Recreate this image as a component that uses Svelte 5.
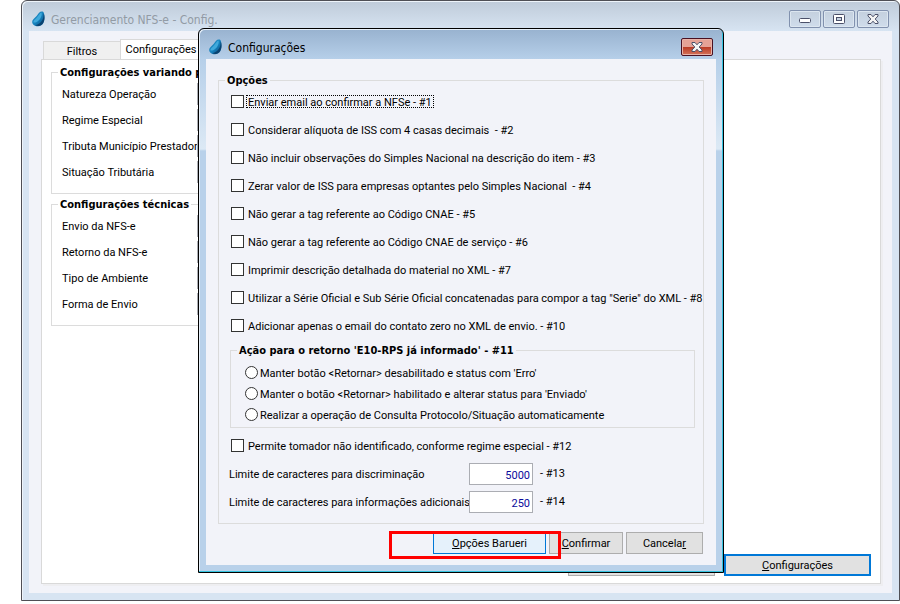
<script>
  const variableFields = [
    { id: 'natureza', text: 'Natureza Operação' },
    { id: 'regime', text: 'Regime Especial' },
    { id: 'tributa', text: 'Tributa Município Prestador' },
    { id: 'situacao', text: 'Situação Tributária' },
  ];

  const technicalFields = [
    { id: 'envio', text: 'Envio da NFS-e' },
    { id: 'retorno', text: 'Retorno da NFS-e' },
    { id: 'ambiente', text: 'Tipo de Ambiente' },
    { id: 'forma', text: 'Forma de Envio' },
  ];

  let options = $state([
    { text: 'Enviar email ao confirmar a NFSe - #1', checked: false },
    { text: 'Considerar alíquota de ISS com 4 casas decimais  - #2', checked: false },
    { text: 'Não incluir observações do Simples Nacional na descrição do item - #3', checked: false },
    { text: 'Zerar valor de ISS para empresas optantes pelo Simples Nacional  - #4', checked: false },
    { text: 'Não gerar a tag referente ao Código CNAE - #5', checked: false },
    { text: 'Não gerar a tag referente ao Código CNAE de serviço - #6', checked: false },
    { text: 'Imprimir descrição detalhada do material no XML - #7', checked: false },
    { text: 'Utilizar a Série Oficial e Sub Série Oficial concatenadas para compor a tag "Serie" do XML - #8', checked: false },
    { text: 'Adicionar apenas o email do contato zero no XML de envio. - #10', checked: false },
  ]);

  const actions = [
    { id: 'manter-desabilitado', text: "Manter botão <Retornar> desabilitado e status com 'Erro'" },
    { id: 'manter-habilitado', text: "Manter o botão <Retornar> habilitado e alterar status para 'Enviado'" },
    { id: 'consultar', text: 'Realizar a operação de Consulta Protocolo/Situação automaticamente' },
  ];

  let action = $state('');
  let allowUnidentified = $state(false);
  let focused = $state(0);
  let limits = $state([
    { id: 'discriminacao', text: 'Limite de caracteres para discriminação', value: '5000', tag: '- #13' },
    { id: 'adicionais', text: 'Limite de caracteres para informações adicionais', value: '250', tag: '- #14' },
  ]);
</script>

{#snippet logo()}
  <svg class="logo" viewBox="0 0 16 18" aria-hidden="true">
    <defs>
      <linearGradient id="drop" x1="0" y1="0" x2="1" y2="1">
        <stop offset="0" stop-color="#2a8fc4" />
        <stop offset="0.5" stop-color="#1682bd" />
        <stop offset="1" stop-color="#0b4c80" />
      </linearGradient>
    </defs>
    <path d="M10.800 1.500C13 1.500 13.200 3.500 13.400 7C13.700 12.500 11.500 16.300 7 16.300C3.500 16.300 1 14.500 1.200 11.800C1.500 8.800 4.300 8 6 5.500C7.500 3.300 8.500 1.500 10.800 1.500Z" fill="url(#drop)" />
    <path d="M10.500 2.500C8.500 3 7.600 6 5.500 8C3.500 10 2.300 10.500 2.500 12.500C5 13.200 8.500 10.500 9.800 7.500C10.600 5.700 11 4 10.500 2.500Z" fill="#3fa9db" />
    <path d="M12.600 3.500C13 9 10.500 13.500 4.500 15.300C9.500 17.500 13.600 13.500 13.500 7.500C13.500 5.500 13.200 4.300 12.600 3.500Z" fill="#0a4270" />
  </svg>
{/snippet}

{#snippet cross()}
  <svg viewBox="0 0 12 10" aria-hidden="true">
    <path d="M1 .5h3l2 2.300 2-2.300h3v1.500L8.200 5 11 8v1.500H8L6 7.200 4 9.500H1V8l2.800-3L1 2z" fill="#f4f4f4" stroke="#4b5069" />
  </svg>
{/snippet}

{#snippet fieldRows(fields)}
  {#each fields as field}
    <div class="field">
      <label for={field.id}>{field.text}</label>
      <select id={field.id}></select>
    </div>
  {/each}
{/snippet}

<div class="window">
  <header class="titlebar">
    {@render logo()}
    <span class="title inactive">Gerenciamento NFS-e - Config.</span>
    <div class="controls">
      <button class="control" aria-label="Minimizar">
        <svg viewBox="0 0 12 10" aria-hidden="true">
          <rect x="0.500" y="4.500" width="11" height="4" rx="1" fill="#fff" stroke="#4b5069" />
        </svg>
      </button>
      <button class="control" aria-label="Maximizar">
        <svg viewBox="0 0 12 10" aria-hidden="true">
          <rect x="0.500" y="0.500" width="11" height="9" rx="1" fill="#fff" stroke="#4b5069" />
          <rect x="3.500" y="3.500" width="5" height="3" fill="#c6d3e2" stroke="#4b5069" />
        </svg>
      </button>
      <button class="control" aria-label="Fechar">{@render cross()}</button>
    </div>
  </header>

  <main class="client">
    <nav class="tabs">
      <button class="tab">Filtros</button>
      <button class="tab active">Configurações</button>
    </nav>
    <section class="panel">
      <div class="groups">
        <fieldset>
          <legend>Configurações variando por</legend>
          {@render fieldRows(variableFields)}
        </fieldset>
        <fieldset>
          <legend>Configurações técnicas</legend>
          {@render fieldRows(technicalFields)}
        </fieldset>
      </div>
      <footer class="panel-actions">
        <button class="button wide" aria-label="Salvar"></button>
        <button class="button wide default"><span><u>C</u>onfigurações</span></button>
      </footer>
    </section>
  </main>

  <div class="dialog" role="dialog" aria-labelledby="dialog-title">
    <header class="titlebar">
      {@render logo()}
      <span class="title" id="dialog-title">Configurações</span>
      <div class="controls">
        <button class="control close" aria-label="Fechar">{@render cross()}</button>
      </div>
    </header>

    <form class="dialog-client">
      <fieldset class="options">
        <legend>Opções</legend>
        {#each options as option, index}
          <label class="check">
            <input type="checkbox" bind:checked={option.checked} onfocus={() => (focused = index)} />
            <span class:focused={index === focused}>{option.text}</span>
          </label>
        {/each}

        <fieldset class="actions">
          <legend>Ação para o retorno 'E10-RPS já informado' - #11</legend>
          {#each actions as item}
            <label class="radio">
              <input type="radio" name="action" value={item.id} bind:group={action} />
              <span>{item.text}</span>
            </label>
          {/each}
        </fieldset>

        <label class="check">
          <input type="checkbox" bind:checked={allowUnidentified} />
          <span>Permite tomador não identificado, conforme regime especial - #12</span>
        </label>

        {#each limits as limit}
          <div class="limit">
            <label for={limit.id}>{limit.text}</label>
            <input id={limit.id} type="text" bind:value={limit.value} />
            <span>{limit.tag}</span>
          </div>
        {/each}
      </fieldset>

      <footer class="dialog-actions">
        <button type="button" class="button hot"><span><u>O</u>pções Barueri</span></button>
        <button type="button" class="button confirm"><span><u>C</u>onfirmar</span></button>
        <button type="button" class="button cancel"><span>Cancela<u>r</u></span></button>
        <div class="marker"></div>
      </footer>
    </form>
  </div>
</div>

<style>
  :global(body) {
    margin: 0;
    background: #fff;
  }

  * {
    box-sizing: border-box;
  }

  .window,
  button,
  input,
  select {
    font-family: Roboto, 'Liberation Sans', sans-serif;
    font-size: 11px;
    color: #000;
  }

  .window {
    position: relative;
    display: flex;
    flex-direction: column;
    min-height: calc(100vh - 3px);
    margin: 0 0 3px 21px;
    padding: 0 7px 7px;
    border: 1px solid #4f4f55;
    border-radius: 6px 6px 0 0;
    background: linear-gradient(#bfcbd9, #d7e4f2 30px);
    box-shadow: inset 1px 1px #eef4fa;
    line-height: 16px;
  }

  .titlebar {
    display: flex;
    align-items: center;
    height: 30px;
    padding: 6px 3px 0 2px;
  }

  .logo {
    width: 16px;
    height: 18px;
    margin-right: 4px;
  }

  .title {
    flex: 1;
    padding-top: 1px;
    font-family: 'DejaVu Sans Condensed', 'DejaVu Sans', sans-serif;
    font-size: 12px;
  }

  .inactive {
    color: #929ba5;
  }

  .controls {
    display: flex;
    gap: 2px;
  }

  .control {
    display: grid;
    place-items: center;
    width: 32px;
    height: 18px;
    padding: 0;
    border: 1px solid #8191ae;
    border-radius: 2px;
    background: linear-gradient(#c4d0de, #cfdceb);
    box-shadow: inset 0 0 0 1px #dce6f0;
  }

  .control svg {
    width: 12px;
    height: 10px;
  }

  .close {
    border-color: #4a1122;
    background: linear-gradient(#e5a296 0 8px, #b93a24 8px, #d4735a);
    box-shadow: inset 0 0 0 1px #e8b3a9;
  }

  .client {
    display: flex;
    flex: 1;
    flex-direction: column;
    padding: 8px 11px 9px 12px;
    background: #f2f3f9;
  }

  .tabs {
    display: flex;
    align-items: flex-end;
    height: 20px;
    padding-left: 2px;
  }

  .tab {
    width: 78px;
    height: 18px;
    padding: 2px 0 0;
    border: 1px solid #d9d9d9;
    border-bottom: 0;
    background: #f0f0f0;
  }

  .tab.active {
    width: 82px;
    height: 20px;
    margin-left: -1px;
    padding: 0;
    background: #fff;
  }

  .panel {
    display: flex;
    flex: 1;
    flex-direction: column;
    justify-content: space-between;
    padding: 4px 9px 7px;
    border: 1px solid #d9d9d9;
    background: #fff;
    box-shadow: 2px 2px #eeeef1;
  }

  fieldset {
    min-width: 0;
    margin: 0;
    padding: 1px 10px 8px;
    border: 1px solid #dcdcdc;
  }

  legend {
    height: 16px;
    margin-left: -4px;
    padding: 0 2px;
    font-family: 'DejaVu Sans Condensed', 'DejaVu Sans', sans-serif;
    font-weight: bold;
    line-height: 18px;
  }

  .groups {
    display: flex;
    flex-direction: column;
    gap: 2px;
    width: 60%;
  }

  .field {
    display: flex;
    align-items: center;
    height: 26px;
  }

  .field label {
    width: 135px;
    padding-top: 1px;
    white-space: nowrap;
  }

  .field select {
    flex: 1;
    height: 22px;
    border: 1px solid #abadb3;
    background: #fff;
  }

  .panel-actions {
    display: flex;
    justify-content: flex-end;
    gap: 9px;
  }

  .button {
    height: 22px;
    padding: 0;
    border: 1px solid #adadad;
    background: #e1e1e1;
  }

  .wide {
    width: 147px;
  }

  .default {
    border: 2px solid #0078d7;
  }

  .dialog {
    position: absolute;
    top: 27px;
    left: 176px;
    width: 526px;
    padding: 0 7px 7px;
    border: 1px solid #000;
    border-radius: 6px 6px 0 0;
    background: linear-gradient(#98b2cf, #b6cfe9 30px, #dce9f5 120px, #b9d1ea 122px);
    box-shadow: inset -1px -1px #35c3e0, inset 1px 1px #e6f0fa;
  }

  .dialog-client {
    padding: 13px 12px 11px;
    background: #f2f3f9;
  }

  .options {
    padding: 0 8px 7px 10px;
  }

  .check,
  .radio {
    display: flex;
    align-items: center;
    gap: 2px;
    height: 28px;
    padding: 0 0 1px 2px;
    white-space: pre;
  }

  .check input,
  .radio input {
    flex: none;
    width: 13px;
    height: 13px;
    margin: 0;
    border: 1px solid #333;
    background: #fff;
    appearance: none;
    outline: 0;
  }

  .check input:checked,
  .radio input:checked {
    background: #333;
    box-shadow: inset 0 0 0 3px #fff;
  }

  .radio input {
    border-radius: 50%;
  }

  .check span {
    height: 13px;
    padding: 0 1px;
    border: 1px dotted transparent;
    line-height: 14px;
  }

  .check .focused {
    border-color: #000;
  }

  .actions {
    margin: 2px 0 4px 1px;
    padding: 4px 12px 2px;
  }

  .actions legend {
    margin-left: -6px;
  }

  .radio {
    height: 21px;
    padding-bottom: 0;
  }

  .radio span {
    padding-top: 2px;
  }

  .limit {
    display: flex;
    align-items: center;
    height: 28px;
  }

  .limit label {
    width: 240px;
    padding-top: 1px;
    white-space: nowrap;
  }

  .limit input {
    width: 64px;
    height: 22px;
    margin-right: 7px;
    padding: 2px 2px 0;
    border: 1px solid #abadb3;
    background: #fff;
    color: #0a0a9c;
    text-align: right;
  }

  .dialog-actions {
    position: relative;
    display: flex;
    justify-content: flex-end;
    gap: 3px;
    margin-top: 8px;
    padding-right: 1px;
  }

  .hot {
    width: 113px;
    border-color: #0078d7;
    background: #e5f1fb;
  }

  .confirm {
    width: 74px;
  }

  .cancel {
    width: 77px;
  }

  .marker {
    position: absolute;
    top: -1px;
    right: 143px;
    width: 172px;
    height: 28px;
    border: 3px solid #f00;
    pointer-events: none;
  }
</style>
